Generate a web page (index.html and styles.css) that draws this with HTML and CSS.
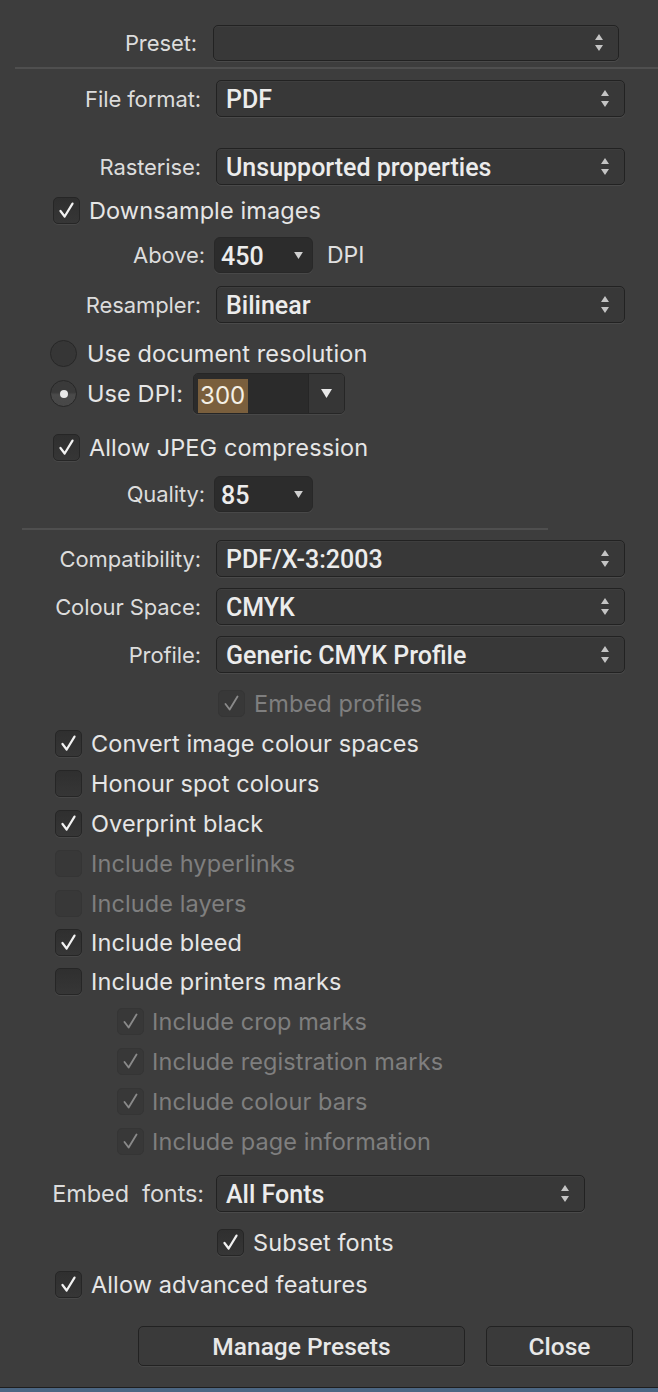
FILE: index.html
```html
<!DOCTYPE html>
<html>
<head>
<meta charset="utf-8">
<link rel="stylesheet" href="styles.css">
</head>
<body>
<div class="dialog">

  <div class="row sel-row preset-row">
    <span class="lbl">Preset:</span>
    <div class="select"><span class="val"></span>
      <svg class="updown" viewBox="0 0 10 22"><path d="M5 2 L9 8 L1 8 Z M1 13 L9 13 L5 19 Z"/></svg>
    </div>
  </div>

  <div class="sep sep-top"></div>

  <div class="row sel-row m11">
    <span class="lbl">File format:</span>
    <div class="select"><span class="val">PDF</span>
      <svg class="updown" viewBox="0 0 10 22"><path d="M5 2 L9 8 L1 8 Z M1 13 L9 13 L5 19 Z"/></svg>
    </div>
  </div>

  <div class="row sel-row m31">
    <span class="lbl">Rasterise:</span>
    <div class="select"><span class="val">Unsupported properties</span>
      <svg class="updown" viewBox="0 0 10 22"><path d="M5 2 L9 8 L1 8 Z M1 13 L9 13 L5 19 Z"/></svg>
    </div>
  </div>

  <div class="row check-row m12 ind53">
    <span class="cb on"><svg viewBox="0 0 27 27"><path d="M7 14 L11.5 20 L20 6"/></svg></span>
    <span class="ctext">Downsample images</span>
  </div>

  <div class="row sel-row m13">
    <span class="lbl lbl-dd">Above:</span>
    <div class="dd"><span class="val">450</span>
      <svg class="tri" viewBox="0 0 10 8"><path d="M0 0 L10 0 L5 8 Z"/></svg>
    </div>
    <span class="unit">DPI</span>
  </div>

  <div class="row sel-row m13">
    <span class="lbl">Resampler:</span>
    <div class="select"><span class="val">Bilinear</span>
      <svg class="updown" viewBox="0 0 10 22"><path d="M5 2 L9 8 L1 8 Z M1 13 L9 13 L5 19 Z"/></svg>
    </div>
  </div>

  <div class="row radio-row m16">
    <span class="radio"></span>
    <span class="ctext">Use document resolution</span>
  </div>

  <div class="row radio-row m5">
    <span class="radio sel"><span class="dot"></span></span>
    <span class="ctext">Use DPI:</span>
    <div class="combo">
      <div class="combo-field"><span class="hl">300</span></div>
      <div class="combo-btn"><svg class="tri" viewBox="0 0 10 8"><path d="M0 0 L10 0 L5 8 Z"/></svg></div>
    </div>
  </div>

  <div class="row check-row m20 ind53">
    <span class="cb on"><svg viewBox="0 0 27 27"><path d="M7 14 L11.5 20 L20 6"/></svg></span>
    <span class="ctext">Allow JPEG compression</span>
  </div>

  <div class="row sel-row m15">
    <span class="lbl lbl-dd">Quality:</span>
    <div class="dd"><span class="val">85</span>
      <svg class="tri" viewBox="0 0 10 8"><path d="M0 0 L10 0 L5 8 Z"/></svg>
    </div>
  </div>

  <div class="sep sep-mid"></div>

  <div class="row sel-row m10">
    <span class="lbl">Compatibility:</span>
    <div class="select"><span class="val">PDF/X-3:2003</span>
      <svg class="updown" viewBox="0 0 10 22"><path d="M5 2 L9 8 L1 8 Z M1 13 L9 13 L5 19 Z"/></svg>
    </div>
  </div>

  <div class="row sel-row m11">
    <span class="lbl">Colour Space:</span>
    <div class="select"><span class="val">CMYK</span>
      <svg class="updown" viewBox="0 0 10 22"><path d="M5 2 L9 8 L1 8 Z M1 13 L9 13 L5 19 Z"/></svg>
    </div>
  </div>

  <div class="row sel-row m11">
    <span class="lbl">Profile:</span>
    <div class="select"><span class="val">Generic CMYK Profile</span>
      <svg class="updown" viewBox="0 0 10 22"><path d="M5 2 L9 8 L1 8 Z M1 13 L9 13 L5 19 Z"/></svg>
    </div>
  </div>

  <div class="row check-row m17 ind218 disabled">
    <span class="cb on"><svg viewBox="0 0 27 27"><path d="M7 14 L11.5 20 L20 6"/></svg></span>
    <span class="ctext">Embed profiles</span>
  </div>

  <div class="checklist">
    <div class="row list-row">
      <span class="cb on"><svg viewBox="0 0 27 27"><path d="M7 14 L11.5 20 L20 6"/></svg></span>
      <span class="ctext">Convert image colour spaces</span>
    </div>
    <div class="row list-row">
      <span class="cb"></span>
      <span class="ctext">Honour spot colours</span>
    </div>
    <div class="row list-row">
      <span class="cb on"><svg viewBox="0 0 27 27"><path d="M7 14 L11.5 20 L20 6"/></svg></span>
      <span class="ctext">Overprint black</span>
    </div>
    <div class="row list-row disabled">
      <span class="cb"></span>
      <span class="ctext">Include hyperlinks</span>
    </div>
    <div class="row list-row disabled">
      <span class="cb"></span>
      <span class="ctext">Include layers</span>
    </div>
    <div class="row list-row tight">
      <span class="cb on"><svg viewBox="0 0 27 27"><path d="M7 14 L11.5 20 L20 6"/></svg></span>
      <span class="ctext">Include bleed</span>
    </div>
    <div class="row list-row">
      <span class="cb"></span>
      <span class="ctext">Include printers marks</span>
    </div>
  </div>

  <div class="checklist sub">
    <div class="row list-row disabled">
      <span class="cb on"><svg viewBox="0 0 27 27"><path d="M7 14 L11.5 20 L20 6"/></svg></span>
      <span class="ctext">Include crop marks</span>
    </div>
    <div class="row list-row disabled">
      <span class="cb on"><svg viewBox="0 0 27 27"><path d="M7 14 L11.5 20 L20 6"/></svg></span>
      <span class="ctext">Include registration marks</span>
    </div>
    <div class="row list-row disabled">
      <span class="cb on"><svg viewBox="0 0 27 27"><path d="M7 14 L11.5 20 L20 6"/></svg></span>
      <span class="ctext">Include colour bars</span>
    </div>
    <div class="row list-row disabled">
      <span class="cb on"><svg viewBox="0 0 27 27"><path d="M7 14 L11.5 20 L20 6"/></svg></span>
      <span class="ctext">Include page information</span>
    </div>
  </div>

  <div class="row sel-row fonts-row">
    <span class="lbl lbl-fonts">Embed&nbsp;&nbsp;fonts:</span>
    <div class="select select-short"><span class="val">All Fonts</span>
      <svg class="updown" viewBox="0 0 10 22"><path d="M5 2 L9 8 L1 8 Z M1 13 L9 13 L5 19 Z"/></svg>
    </div>
  </div>

  <div class="row check-row m17 ind217">
    <span class="cb on"><svg viewBox="0 0 27 27"><path d="M7 14 L11.5 20 L20 6"/></svg></span>
    <span class="ctext">Subset fonts</span>
  </div>

  <div class="row check-row m15 ind55">
    <span class="cb on"><svg viewBox="0 0 27 27"><path d="M7 14 L11.5 20 L20 6"/></svg></span>
    <span class="ctext">Allow advanced features</span>
  </div>

  <div class="row buttons">
    <button class="btn btn-manage">Manage Presets</button>
    <button class="btn btn-close">Close</button>
  </div>

</div>
<div class="bottom-bar"></div>
</body>
</html>
```

FILE: styles.css
```css
html, body {
  margin: 0;
  padding: 0;
  background: #3d3d3d;
}
body {
  width: 658px;
  height: 1392px;
  overflow: hidden;
  position: relative;
  font-family: "Inter", "Liberation Sans", sans-serif;
  color: #e4e4e4;
}
.dialog {
  padding-top: 25px;
  height: 1363px;
}
.row {
  display: flex;
  align-items: center;
}
.m5 { margin-top: 5px; }
.m10 { margin-top: 10px; }
.m11 { margin-top: 11px; }
.m12 { margin-top: 12px; }
.m13 { margin-top: 13px; }
.m15 { margin-top: 15px; }
.m16 { margin-top: 16px; }
.m17 { margin-top: 17px; }
.m20 { margin-top: 20px; }
.m31 { margin-top: 31px; }

/* labels */
.lbl {
  width: 201px;
  flex: none;
  text-align: right;
  font-size: 22px;
  color: #dcdcdc;
  letter-spacing: -0.1px;
  white-space: nowrap;
}
.preset-row .lbl { width: 197px; }
.lbl-dd { width: 205px; }
.lbl-fonts {
  width: 204px;
  font-size: 23.5px;
}

/* selects with up/down arrows */
.select {
  margin-left: 15px;
  width: 409px;
  height: 37px;
  box-sizing: border-box;
  border: 1.5px solid #222;
  border-radius: 5px;
  background: #383838;
  box-shadow: 0 1px 0 rgba(255,255,255,0.07), inset 0 1px 0 rgba(255,255,255,0.03);
  display: flex;
  align-items: center;
  padding-left: 9px;
  padding-right: 14px;
}
.preset-row .select {
  width: 406px;
  height: 36px;
  margin-left: 16px;
}
.fonts-row .select { margin-left: 12px; }
.select-short { width: 369px; }
.select .val, .dd .val {
  flex: 1;
  font-family: "Roboto", "Liberation Sans", sans-serif;
  font-weight: 500;
  font-size: 25px;
  color: #ececec;
  white-space: nowrap;
  padding-top: 2px;
}
.updown {
  width: 10px;
  height: 22px;
  fill: #c4c4c4;
}

/* small dropdowns */
.dd {
  margin-left: 9px;
  width: 99px;
  height: 36px;
  box-sizing: border-box;
  border-radius: 6px;
  background: #2c2c2c;
  border: 1px solid #282828;
  box-shadow: 0 1px 0 rgba(255,255,255,0.06);
  display: flex;
  align-items: center;
  padding-left: 6px;
  padding-right: 9px;
}
.tri {
  width: 9px;
  height: 7px;
  fill: #d0d0d0;
}
.unit {
  margin-left: 14px;
  font-size: 23px;
  color: #e0e0e0;
}

/* separators */
.sep {
  height: 2px;
  background: #4f4f4f;
}
.sep-top {
  margin-top: 6px;
  margin-left: 15px;
}
.sep-mid {
  margin-top: 16px;
  margin-left: 22px;
  width: 526px;
}

/* checkboxes */
.check-row { height: 27px; }
.ind53 { padding-left: 53px; }
.ind55 { padding-left: 55px; }
.ind217 { padding-left: 217px; }
.ind218 { padding-left: 218px; }
.cb {
  flex: none;
  width: 27px;
  height: 27px;
  box-sizing: border-box;
  border-radius: 5px;
  border: 1.5px solid #262626;
  background: linear-gradient(#2f2f2f, #363636);
  box-shadow: 0 1px 0 rgba(255,255,255,0.06);
  display: flex;
  align-items: center;
  justify-content: center;
}
.cb svg {
  width: 27px;
  height: 27px;
  fill: none;
  stroke: #f2f2f2;
  stroke-width: 2.4;
  stroke-linecap: round;
  stroke-linejoin: round;
}
.ctext {
  margin-left: 9px;
  font-size: 23.5px;
  color: #e6e6e6;
  white-space: nowrap;
  letter-spacing: 0.1px;
}
.disabled .ctext { color: #7f7f7f; }
.disabled .cb {
  border-color: #353535;
  background: #383838;
  box-shadow: none;
}
.disabled .cb svg { stroke: #8a8a8a; stroke-width: 2; }

/* check list */
.checklist {
  margin-top: 6px;
  padding-left: 55px;
}
.list-row { height: 40px; }
.list-row.tight { height: 38px; }
.checklist.sub {
  margin-top: 0;
  padding-left: 117px;
}
.checklist.sub .ctext { margin-left: 8px; }

/* radios */
.radio-row { padding-left: 50px; }
.radio-row .ctext { margin-left: 10px; }
.radio {
  flex: none;
  width: 27px;
  height: 27px;
  box-sizing: border-box;
  border-radius: 50%;
  border: 1.5px solid #272727;
  background: #363636;
  display: flex;
  align-items: center;
  justify-content: center;
}
.radio.sel {
  background: linear-gradient(#3a3a3a 0%, #3a3a3a 45%, #4a4a4a 55%, #474747 100%);
}
.radio .dot {
  width: 8px;
  height: 8px;
  border-radius: 50%;
  background: #e8e8e8;
}

/* combo */
.combo {
  margin-left: 10px;
  width: 152px;
  height: 41px;
  display: flex;
  box-sizing: border-box;
  border-radius: 5px;
  overflow: hidden;
  border: 1px solid #262626;
  box-shadow: 0 1px 0 rgba(255,255,255,0.06);
}
.combo-field {
  flex: 1;
  background: #2b2b2b;
  display: flex;
  align-items: center;
  padding-left: 4px;
}
.hl {
  background: #7a5f3d;
  color: #f4f0e6;
  font-size: 24px;
  line-height: 34px;
  padding: 0 3px 0 2px;
  margin-top: 4px;
}
.combo-btn {
  width: 35px;
  background: #363636;
  border-left: 1px solid #262626;
  display: flex;
  align-items: center;
  justify-content: center;
}
.combo-btn .tri { width: 11px; height: 9px; fill: #e8e8e8; }

.fonts-row { margin-top: 14px; }

/* buttons */
.buttons {
  margin-top: 28px;
  padding-left: 138px;
}
.btn {
  height: 40px;
  box-sizing: border-box;
  border: 1.5px solid #222;
  border-radius: 5px;
  background: #3a3a3a;
  box-shadow: 0 1px 0 rgba(255,255,255,0.06);
  color: #e8e8e8;
  font-family: "Roboto", "Liberation Sans", sans-serif;
  font-weight: 500;
  font-size: 24.5px;
  padding: 0;
}
.btn-manage { width: 327px; }
.btn-close { width: 147px; margin-left: 21px; }

.bottom-bar {
  position: absolute;
  left: 0;
  right: 0;
  bottom: 0;
  height: 4px;
  border-top: 1px solid #1e1e1e;
  background: #4b6683;
}
```
